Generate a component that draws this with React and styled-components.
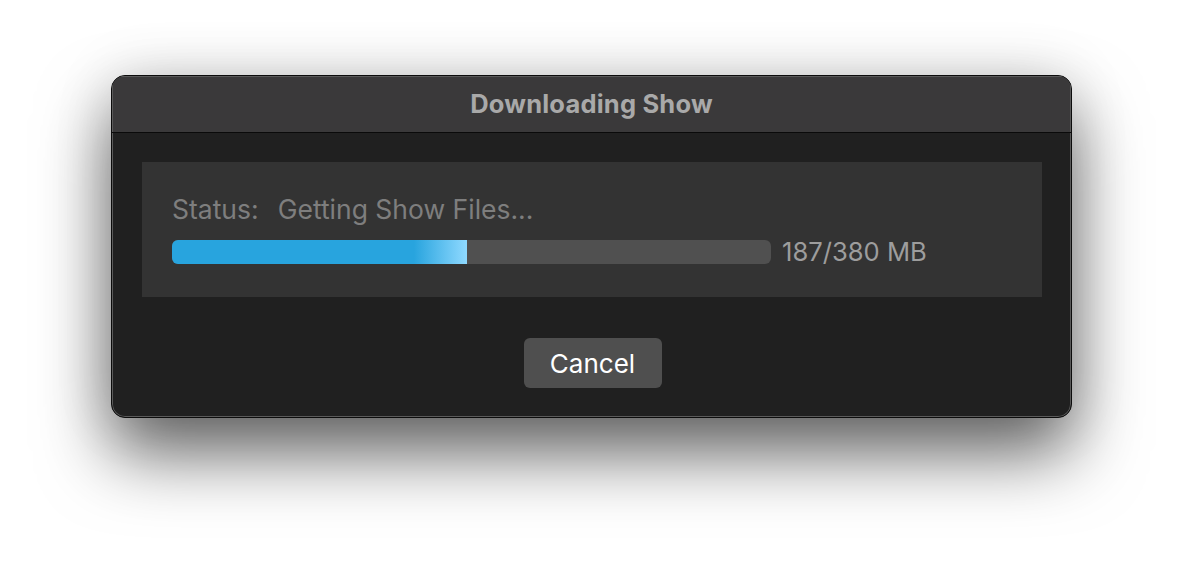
import React from 'react';
import styled, { createGlobalStyle } from 'styled-components';

const GlobalStyle = createGlobalStyle`
    body {
        margin: 0;
        background: #ffffff;
        font-family: Inter, "Liberation Sans", sans-serif;
    }
`

function App() {
    const done = 187;
    const total = 380;
    return (
        <Page>
            <GlobalStyle />
            <Window>
                <TitleBar>Downloading Show</TitleBar>
                <Body>
                    <Panel>
                        <StatusLine>
                            <span>Status:</span>
                            <span>Getting Show Files...</span>
                        </StatusLine>
                        <ProgressRow>
                            <Track>
                                <Fill style={{ width: `${(done / total) * 100}%` }} />
                            </Track>
                            <Amount>{done}/{total} MB</Amount>
                        </ProgressRow>
                    </Panel>
                    <Actions>
                        <Button>Cancel</Button>
                    </Actions>
                </Body>
            </Window>
        </Page>
    )
}

export default App

const Page = styled.div`
    width: 1184px;
    height: 566px;
    display: flex;
    align-items: flex-start;
    padding: 75px 0 0 111px;
    box-sizing: border-box;
    overflow: hidden;
`

const Window = styled.div`
    width: 961px;
    height: 343px;
    box-sizing: border-box;
    display: flex;
    flex-direction: column;
    background: #202020;
    border: 1px solid #0c0c0c;
    border-radius: 14px;
    overflow: hidden;
    box-shadow: inset 0 0 0 1px #5a5a5a, 0 36px 70px rgba(0, 0, 0, 0.6), 0 0 60px rgba(0, 0, 0, 0.12);
`

const TitleBar = styled.div`
    height: 55px;
    flex-shrink: 0;
    display: flex;
    align-items: center;
    justify-content: center;
    padding-bottom: 1px;
    background: #3a393a;
    border-bottom: 1px solid #0a0a0a;
    box-shadow: inset 1px 1px 0 #5a5a5a, inset -1px 0 0 #5a5a5a;
    color: #a9a9a9;
    font-weight: 700;
    font-size: 25.5px;
    letter-spacing: 0.2px;
`

const Body = styled.div`
    flex: 1;
    display: flex;
    flex-direction: column;
    padding: 29px 29px 29px 30px;
`

const Panel = styled.div`
    height: 135px;
    box-sizing: border-box;
    background: #333333;
    padding: 32px 30px 0 30px;
`

const StatusLine = styled.div`
    display: flex;
    gap: 19px;
    color: #7e7e7e;
    font-size: 26.5px;
    line-height: 30px;
`

const ProgressRow = styled.div`
    display: flex;
    align-items: center;
    gap: 11px;
    margin-top: 16px;
`

const Track = styled.div`
    width: 599px;
    height: 24px;
    border-radius: 6px;
    background: #505050;
    overflow: hidden;
`

const Fill = styled.div`
    height: 100%;
    background: linear-gradient(to right, #28a4de 0%, #28a4de 82%, #8fd9ff 100%);
`

const Amount = styled.span`
    color: #9d9d9d;
    font-size: 25.6px;
    line-height: 24px;
`

const Actions = styled.div`
    flex: 1;
    display: flex;
    justify-content: center;
    align-items: flex-end;
`

const Button = styled.button`
    width: 138px;
    height: 50px;
    margin-left: 1px;
    border: none;
    border-radius: 6px;
    background: #4f4f4f;
    color: #ffffff;
    font-family: Inter, "Liberation Sans", sans-serif;
    font-size: 26px;
    cursor: pointer;
`
